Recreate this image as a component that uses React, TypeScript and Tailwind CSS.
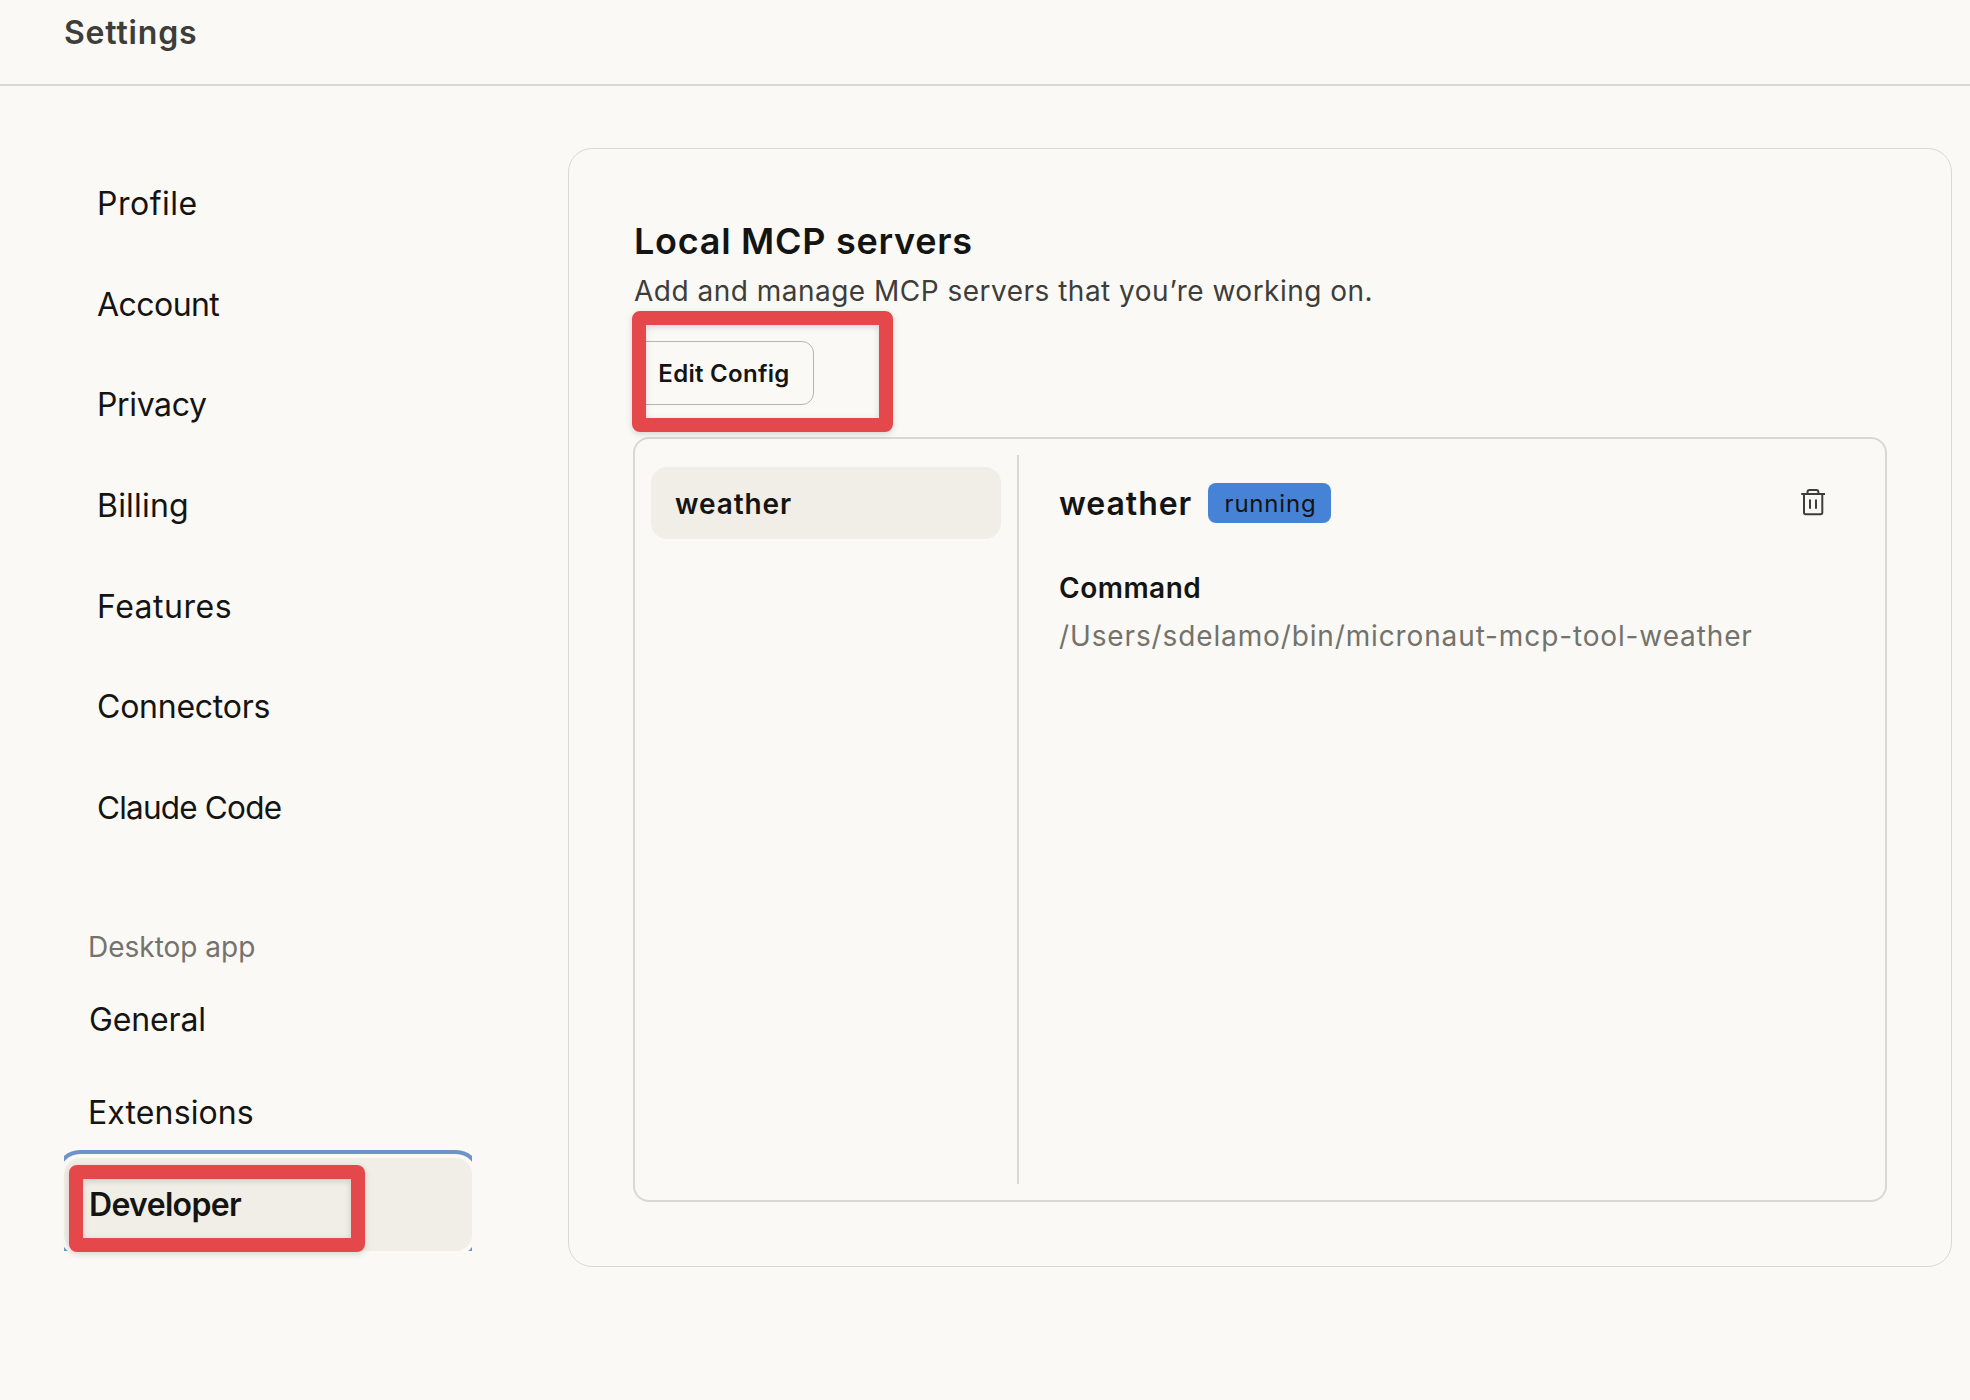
import React from "react";

const accountNav = [
  { label: "Profile", tracking: "tracking-[0.5px]" },
  { label: "Account", tracking: "tracking-[-0.55px]" },
  { label: "Privacy", tracking: "tracking-[-0.36px]" },
  { label: "Billing", tracking: "tracking-[0.2px]" },
  { label: "Features", tracking: "tracking-[0.5px]" },
  { label: "Connectors", tracking: "tracking-[-0.25px]" },
  { label: "Claude Code", tracking: "text-[31.5px] tracking-[-0.8px]" },
];

function TrashIcon() {
  return (
    <svg
      width="26"
      height="28"
      viewBox="0 0 26 28"
      fill="none"
      stroke="#3d3d3a"
      strokeWidth="2"
      strokeLinecap="butt"
      strokeLinejoin="round"
    >
      <path d="M1.2 6H25" />
      <path d="M4 6V24.6Q4 26.3 5.7 26.3H20.6Q22.3 26.3 22.3 24.6V6" />
      <path d="M7.5 5.5V4.2Q7.5 2 9.7 2H16.2Q18.4 2 18.4 4.2V5.5" />
      <path d="M10 11.5V20.8" />
      <path d="M16 11.5V20.8" />
    </svg>
  );
}

function Sidebar() {
  return (
    <aside className="ml-16 w-[408px] text-[32px] leading-[48px] text-[#141413]">
      <nav className="pt-[67.5px]">
        {accountNav.map((item) => (
          <a key={item.label} className="flex h-[100.7px] items-center pl-[33px]">
            <span className={item.tracking}>{item.label}</span>
          </a>
        ))}
      </nav>
      <div className="relative">
        <nav className="overflow-hidden pt-[61.6px]">
          <h2 className="flex h-[52px] items-center pt-0.5 pl-6 text-[28px] leading-10 text-[#73726c]">
            Desktop app
          </h2>
          <a className="flex h-[93px] items-center pt-1 pl-[25px] tracking-[-0.15px]">General</a>
          <a className="flex h-[93px] items-center pt-1 pl-6 tracking-[0.12px]">Extensions</a>
          <a className="flex h-[93px] items-center rounded-2xl bg-[#f0eee6] pt-0.5 pl-[25px] font-semibold tracking-[-0.66px] shadow-[0_0_0_4px_#faf9f5,0_0_0_8px_#6f93c8]">
            Developer
          </a>
        </nav>
        <span className="absolute right-[107px] -bottom-px h-[87px] w-[296px] rounded-lg border-[14px] border-[#e5484b] drop-shadow-[0_2px_3px_rgba(0,0,0,0.15)]" />
      </div>
    </aside>
  );
}

function ServerPanel() {
  return (
    <div className="mt-8 -ml-px flex h-[765px] w-[1254px] rounded-2xl border-2 border-[#d9d8d3]">
      <div className="w-[382px] px-4 pt-7">
        <div className="flex h-[72px] items-center rounded-2xl bg-[#f0eee6] pt-0.5 pl-6 text-[28px] font-semibold tracking-[0.9px]">
          weather
        </div>
      </div>
      <div className="my-4 w-0.5 bg-[#d9d8d3]" />
      <div className="flex-1 pt-11 pr-[59px] pl-10">
        <div className="flex h-10 items-center">
          <h2 className="w-[149px] pt-0.5 text-[32px] leading-10 font-semibold tracking-[0.95px]">weather</h2>
          <span className="flex h-10 w-[123px] items-center justify-center rounded-lg bg-[#4682d6] pt-0.5 pl-0.5 text-2xl leading-8 tracking-[0.8px]">
            running
          </span>
          <button className="mt-[-3px] ml-auto">
            <TrashIcon />
          </button>
        </div>
        <h3 className="mt-[45px] text-[28px] leading-10 font-semibold tracking-[0.5px]">Command</h3>
        <p className="mt-2 text-[28px] leading-10 tracking-[0.87px] text-[#73726c]">
          /Users/sdelamo/bin/micronaut-mcp-tool-weather
        </p>
      </div>
    </div>
  );
}

export default function App() {
  return (
    <div className="h-[1400px] w-[1970px] overflow-hidden bg-[#faf9f5] font-[Inter,sans-serif] text-[#141413]">
      <header className="h-[86px] border-b-2 border-[#d9d8d3] pt-[9px] pl-16">
        <h1 className="text-[32px] leading-[48px] font-semibold tracking-[0.81px] text-[#3d3d3a]">Settings</h1>
      </header>
      <main className="flex">
        <Sidebar />
        <section className="mt-[62px] ml-24 h-[1119px] w-[1384px] rounded-3xl border border-[#d9d8d3] pt-[70px] pl-[65px]">
          <h2 className="text-[36px] leading-[44px] font-semibold tracking-[0.72px]">Local MCP servers</h2>
          <p className="mt-2 text-[28px] leading-10 tracking-[0.49px] text-[#3d3d3a]">
            Add and manage MCP servers that you’re working on.
          </p>
          <div className="relative mt-[30px] w-fit">
            <button className="flex h-16 w-[180px] items-center justify-center rounded-xl border border-[#b5b4af] pt-0.5 text-2xl font-semibold tracking-[0.3px]">
              Edit Config
            </button>
            <span className="absolute -top-[30px] -left-0.5 h-[121px] w-[261px] rounded-lg border-[14px] border-[#e5484b] drop-shadow-[0_2px_3px_rgba(0,0,0,0.15)]" />
          </div>
          <ServerPanel />
        </section>
      </main>
    </div>
  );
}
